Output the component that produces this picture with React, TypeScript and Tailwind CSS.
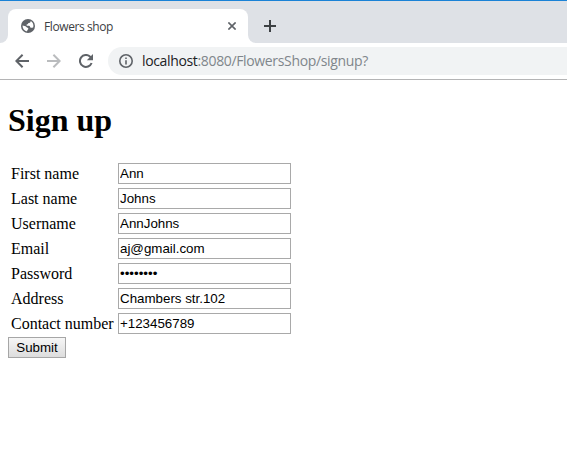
import React from "react";

const fields = [
  { label: "First name", value: "Ann" },
  { label: "Last name", value: "Johns" },
  { label: "Username", value: "AnnJohns" },
  { label: "Email", value: "aj@gmail.com" },
  { label: "Password", value: "password", type: "password" },
  { label: "Address", value: "Chambers str.102" },
  { label: "Contact number", value: "+123456789" },
];

function Globe() {
  return (
    <svg className="size-[14px] shrink-0" viewBox="0 0 14 14" fill="none">
      <circle cx="7" cy="7" r="7" fill="#5f6368" />
      <path
        d="M9.6 1.9C9.9 3.4 8.6 3.9 7.3 4C7.4 5.1 6.4 5.3 5.4 5.7C5.2 6.7 6.4 6.7 8 6.8C9.3 7 8.9 8.3 9.7 8.7C10.6 9.1 11.4 8.5 12.3 8.2C12.9 5.6 11.8 3 9.6 1.9Z"
        fill="white"
      />
      <path
        d="M1.6 6.6C2.8 7 4.4 7.1 5.4 8C6.1 8.8 7.4 8.9 7.4 9.8C7.3 10.8 6.1 10.8 6 12.4C3.4 12 1.4 9.6 1.6 6.6Z"
        fill="white"
      />
    </svg>
  );
}

function Arrow({ className }: { className: string }) {
  return (
    <svg className={className} viewBox="0 0 14 14" fill="none" stroke="currentColor" strokeWidth="2">
      <path d="M14 7H1.6M7.6 0.7L1.3 7L7.6 13.3" />
    </svg>
  );
}

function TabStrip() {
  return (
    <div className="flex h-[43px] border-t border-[#1a82d6] bg-white">
      <div className="w-2 rounded-br-lg bg-[#dee1e6]" />
      <div className="w-60 bg-[#dee1e6] pt-2">
        <div className="flex h-[34px] items-center rounded-t-lg bg-white pr-3 pl-[13px]">
          <Globe />
          <span className="ml-[9px] flex-1 pt-px font-['Open_Sans',sans-serif] text-[12px] tracking-[-0.4px] whitespace-nowrap text-[#3c4043]">
            Flowers shop
          </span>
          <svg className="size-2" viewBox="0 0 8 8" stroke="#5f6368" strokeWidth="1.6">
            <path d="M0.4 0.4L7.6 7.6M7.6 0.4L0.4 7.6" />
          </svg>
        </div>
      </div>
      <div className="flex flex-1 items-center rounded-bl-lg bg-[#dee1e6] pt-2 pl-4">
        <svg className="size-3" viewBox="0 0 12 12" stroke="#3c4043" strokeWidth="2">
          <path d="M6 0V12M0 6H12" />
        </svg>
      </div>
    </div>
  );
}

function Toolbar() {
  return (
    <div className="flex h-[37px] items-start border-b border-[#b4b4b5] bg-white pt-1">
      <div className="flex h-7 w-[108px] items-center gap-[18px] pl-[15px]">
        <Arrow className="size-[14px] text-[#5f6368]" />
        <Arrow className="size-[14px] rotate-180 text-[#babcbe]" />
        <svg className="size-[14px]" viewBox="0 0 14 14" fill="none">
          <path d="M12.6 9A6 6 0 1 1 11.2 2.7L12 3.6" stroke="#5f6368" strokeWidth="2" />
          <path d="M14 0V6.2H7.8Z" fill="#5f6368" />
        </svg>
      </div>
      <div className="flex h-7 flex-1 items-center rounded-l-full bg-[#f1f3f4] pl-[11px]">
        <svg className="size-[14px]" viewBox="0 0 14 14" fill="none">
          <circle cx="7" cy="7" r="6.2" stroke="#5f6368" strokeWidth="1.6" />
          <path d="M7 6.2V10.4M7 3.4V5" stroke="#5f6368" strokeWidth="1.6" />
        </svg>
        <span className="ml-[9px] pb-px font-['Open_Sans',sans-serif] text-[14px] leading-5 tracking-[-0.35px] whitespace-nowrap text-[#80868b]">
          <span className="text-[#202124]">localhost</span>:8080/FlowersShop/signup?
        </span>
      </div>
    </div>
  );
}

export default function App() {
  return (
    <div className="h-[455px] w-full overflow-hidden bg-white">
      <TabStrip />
      <Toolbar />
      <main className="px-2 pt-[22px] font-['Liberation_Serif',serif] text-[16px] text-black">
        <h1 className="text-[32px] leading-[37px] font-bold">Sign up</h1>
        <form className="pt-6" onSubmit={(e) => e.preventDefault()}>
          <div className="flex flex-col gap-1">
            {fields.map((f) => (
              <label key={f.label} className="flex h-[21px] items-center">
                <span className="w-[110px] pl-[3px] leading-[18px] whitespace-nowrap">{f.label}</span>
                <input
                  type={f.type ?? "text"}
                  defaultValue={f.value}
                  className="h-[21px] w-[173px] border border-[#a9a9a9] bg-white px-px font-['Liberation_Sans',sans-serif] text-[13.333px] outline-none"
                />
              </label>
            ))}
          </div>
          <button
            type="submit"
            className="mt-[3px] block h-[21px] w-[58px] border border-[#a6a6a6] bg-linear-to-b from-[#f6f6f6] to-[#dddddd] text-center font-['Liberation_Sans',sans-serif] text-[13.333px] leading-[19px]"
          >
            Submit
          </button>
        </form>
      </main>
    </div>
  );
}
